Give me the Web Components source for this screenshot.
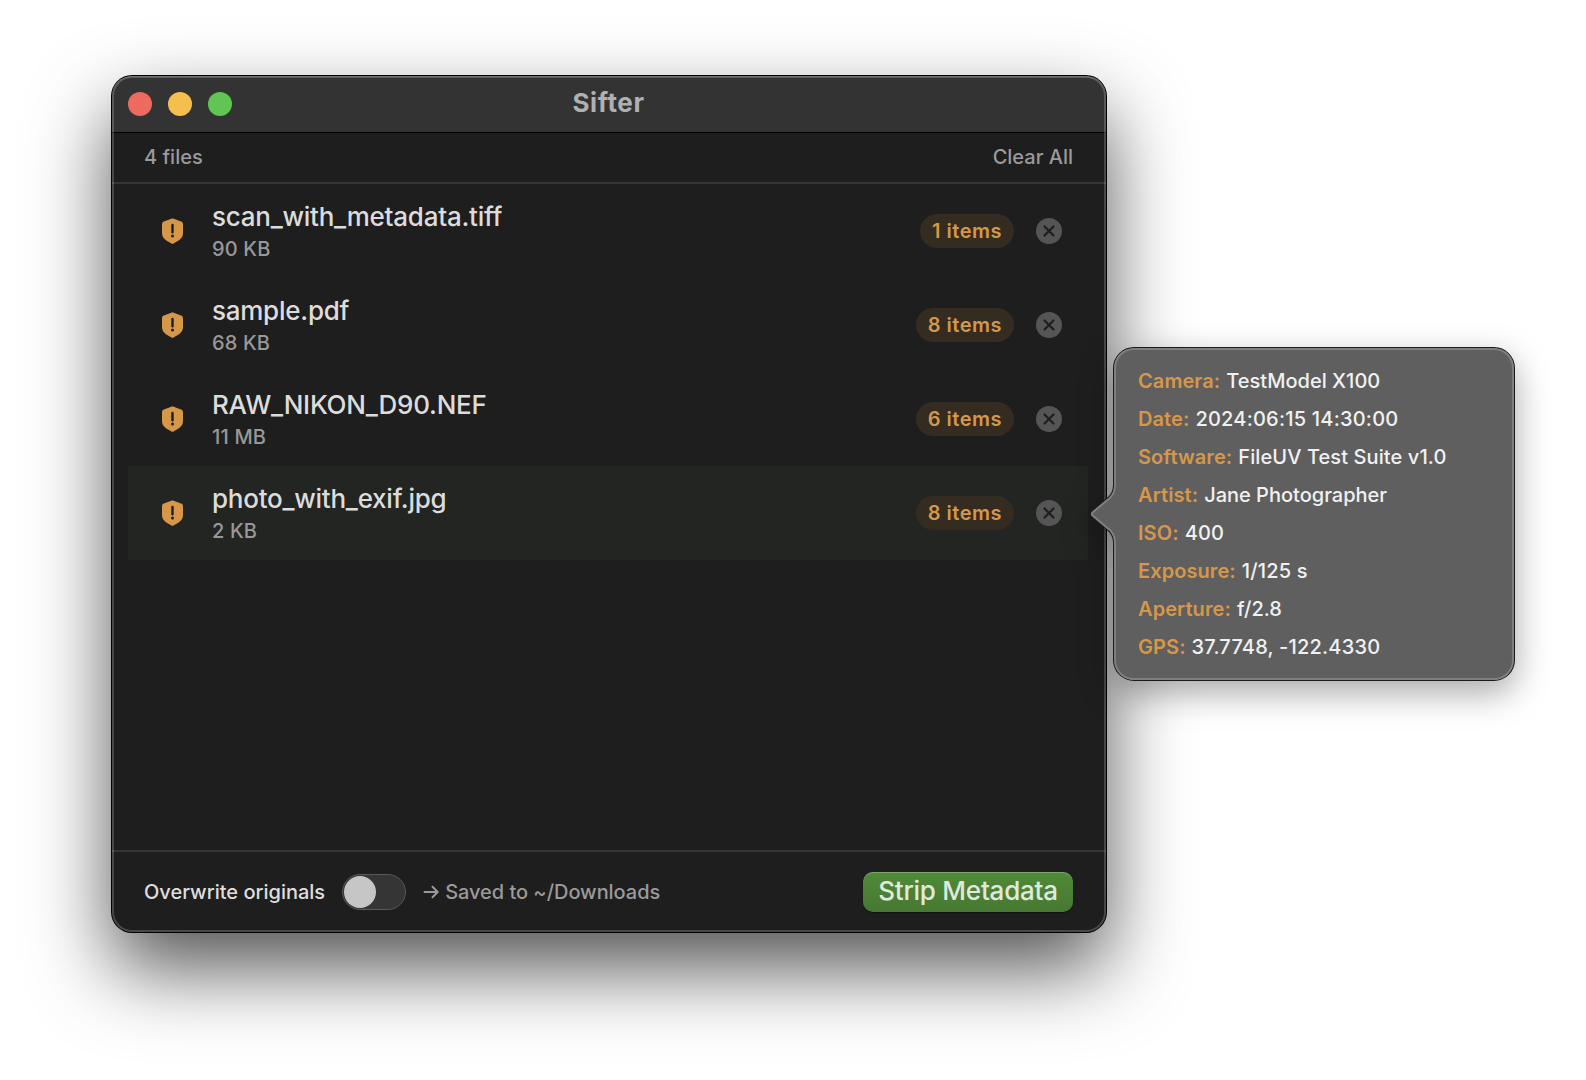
<!DOCTYPE html>
<html lang="en">
<head>
<meta charset="utf-8">
<title>Sifter</title>
<style>
  html {
    background: #fff;
  }

  body {
    position: relative;
    box-sizing: border-box;
    width: 1586px;
    height: 1080px;
    margin: 0;
    padding: 76px 112px;
    overflow: hidden;
    font-family: Inter, "Liberation Sans", sans-serif;
  }

  metadata-popover {
    position: absolute;
    left: 1090px;
    top: 348px;
  }
</style>
</head>
<body>
  <app-window heading="Sifter">
    <list-toolbar slot="toolbar" count="4 files" action="Clear All"></list-toolbar>
    <file-row name="scan_with_metadata.tiff" size="90 KB" items="1 items"></file-row>
    <file-row name="sample.pdf" size="68 KB" items="8 items"></file-row>
    <file-row name="RAW_NIKON_D90.NEF" size="11 MB" items="6 items"></file-row>
    <file-row name="photo_with_exif.jpg" size="2 KB" items="8 items" active></file-row>
    <action-bar slot="footer">
      <span>Overwrite originals</span>
      <toggle-switch></toggle-switch>
      <save-hint>Saved to ~/Downloads</save-hint>
      <primary-button slot="end">Strip Metadata</primary-button>
    </action-bar>
  </app-window>

  <metadata-popover>
    <meta-item label="Camera:" style="--ls: 0.02px">TestModel X100</meta-item>
    <meta-item label="Date:" style="--ls: 0.22px">2024:06:15 14:30:00</meta-item>
    <meta-item label="Software:" style="--ls: 0.1px">FileUV Test Suite v1.0</meta-item>
    <meta-item label="Artist:" style="--ls: 0px">Jane Photographer</meta-item>
    <meta-item label="ISO:">400</meta-item>
    <meta-item label="Exposure:">1/125 s</meta-item>
    <meta-item label="Aperture:" style="--ls: 0px">f/2.8</meta-item>
    <meta-item label="GPS:" style="--ls: 0.2px">37.7748, -122.4330</meta-item>
  </metadata-popover>

<script>
function define(tagName, html, attributes = []) {
  const template = document.createElement("template");
  template.innerHTML = html;

  customElements.define(tagName, class extends HTMLElement {
    constructor() {
      super();
      this.attachShadow({ mode: "open" });
      this.shadowRoot.appendChild(template.content.cloneNode(true));
    }

    connectedCallback() {
      for (const name of attributes) {
        this.shadowRoot.getElementById(name).textContent = this.getAttribute(name) || "";
      }
    }
  });
}

define("app-window", `
  <style>
    :host {
      position: relative;
      display: flex;
      flex-direction: column;
      width: 994px;
      height: 856px;
      border-radius: 20px;
      background: #1e1e1e;
      box-shadow: 0 0 0 1px #000, 0 36px 80px rgba(0, 0, 0, 0.68);
    }

    /* light rim drawn over the content */
    :host::after {
      content: "";
      position: absolute;
      inset: 0;
      border-radius: inherit;
      box-shadow: inset 0 2px 1px -1px rgba(255, 255, 255, 0.18), inset 0 0 0 2px rgba(255, 255, 255, 0.19);
      pointer-events: none;
    }

    header {
      display: grid;
      grid-template-columns: 1fr auto 1fr;
      align-items: center;
      height: 56px;
      padding: 0 17px 0 16px;
      border-bottom: 1px solid #000;
      border-radius: 20px 20px 0 0;
      background: #333;
    }

    .lights {
      display: flex;
      gap: 16px;
    }

    .lights i {
      width: 24px;
      height: 24px;
      border-radius: 50%;
      background: #ed6a5e;
    }

    .lights i:nth-child(2) {
      background: #f5bf4f;
    }

    .lights i:nth-child(3) {
      background: #61c554;
    }

    h1 {
      margin: 0 0 2px;
      font-size: 26px;
      line-height: 32px;
      font-weight: 700;
      letter-spacing: 0.57px;
      color: #b0b0b0;
    }

    main {
      flex: 1;
      padding: 0 18px 0 16px;
    }
  </style>
  <header>
    <div class="lights"><i></i><i></i><i></i></div>
    <h1 id="heading"></h1>
  </header>
  <slot name="toolbar"></slot>
  <main><slot></slot></main>
  <slot name="footer"></slot>
`, ["heading"]);

define("list-toolbar", `
  <style>
    :host {
      display: flex;
      justify-content: space-between;
      align-items: center;
      height: 49px;
      padding: 0 33px 0 32px;
      border-bottom: 2px solid #353535;
      font-size: 20px;
      font-weight: 500;
      line-height: 24px;
      color: #9a9a9a;
    }

    span {
      padding-bottom: 1px;
    }
  </style>
  <span id="count"></span>
  <span id="action"></span>
`, ["count", "action"]);

define("file-row", `
  <style>
    :host {
      display: flex;
      align-items: center;
      box-sizing: border-box;
      height: 94px;
      padding: 0 26px 0 34px;
    }

    :host([active]) {
      background: #222521;
    }

    .shield {
      width: 21px;
      height: 26px;
      margin-right: 29px;
    }

    .file {
      flex: 1;
      padding-top: 4px;
    }

    .file div {
      line-height: 32px;
    }

    #name {
      font-size: 26px;
      font-weight: 500;
      letter-spacing: -0.25px;
      color: #dcdcdc;
    }

    #size {
      font-size: 20px;
      font-weight: 500;
      letter-spacing: 0.15px;
      color: #989898;
    }

    #items {
      padding: 0 12px;
      border-radius: 17px;
      background: #342b21;
      font-size: 20px;
      font-weight: 600;
      line-height: 34px;
      letter-spacing: 0.5px;
      color: #d79748;
    }

    .remove {
      width: 26px;
      height: 26px;
      margin-left: 22px;
    }
  </style>
  <svg class="shield" viewBox="0 0 21 26">
    <path fill="#d79748" d="M10.5 .5C11.3 .5 17 2.7 19.3 3.6Q21 4.3 21 6V15C21 20.2 17.2 22.4 11.6 25.4Q10.5 26 9.4 25.4C3.8 22.4 0 20.2 0 15V6Q0 4.3 1.7 3.6C4 2.7 9.7 .5 10.5 .5Z"/>
    <path stroke="#1e1e1e" stroke-width="2.4" stroke-linecap="round" d="M10.5 7V14.2"/>
    <circle fill="#1e1e1e" cx="10.5" cy="18.1" r="1.5"/>
  </svg>
  <div class="file">
    <div id="name"></div>
    <div id="size"></div>
  </div>
  <span id="items"></span>
  <svg class="remove" viewBox="0 0 26 26">
    <circle fill="#555" cx="13" cy="13" r="13"/>
    <path stroke="#1e1e1e" stroke-width="2.2" stroke-linecap="round" d="M8.5 8.5L17.5 17.5M17.5 8.5L8.5 17.5"/>
  </svg>
`, ["name", "size", "items"]);

define("action-bar", `
  <style>
    :host {
      display: flex;
      align-items: center;
      height: 80px;
      padding: 0 33px 0 32px;
      border-top: 2px solid #353535;
      font-size: 20px;
      font-weight: 500;
      line-height: 24px;
      color: #dedede;
    }

    .start {
      display: flex;
      flex: 1;
      align-items: center;
    }
  </style>
  <div class="start"><slot></slot></div>
  <slot name="end"></slot>
`);

define("toggle-switch", `
  <style>
    :host {
      box-sizing: border-box;
      display: flex;
      width: 64px;
      height: 36px;
      margin-left: 17px;
      padding: 1px;
      border: 1px solid #585858;
      border-radius: 18px;
      background: #353535;
    }

    i {
      width: 32px;
      height: 32px;
      border-radius: 50%;
      background: #c6c6c6;
    }
  </style>
  <i></i>
`);

define("save-hint", `
  <style>
    :host {
      display: flex;
      align-items: center;
      margin-left: 17px;
      letter-spacing: -0.04px;
      color: #9a9a9a;
    }

    svg {
      width: 17px;
      height: 16px;
      margin-right: 5px;
    }
  </style>
  <svg viewBox="0 0 17 16" fill="none" stroke="currentColor" stroke-width="2" stroke-linecap="round" stroke-linejoin="round">
    <path d="M1.5 8H14.5M9.5 2.8L14.7 8L9.5 13.2"/>
  </svg>
  <slot></slot>
`);

define("primary-button", `
  <style>
    :host {
      box-sizing: border-box;
      width: 210px;
      height: 40px;
      padding-bottom: 2px;
      border-radius: 10px;
      background: linear-gradient(#508a3a, #467831);
      box-shadow: inset 0 1px 0 rgba(255, 255, 255, 0.25), 0 1px 1px rgba(0, 0, 0, 0.4);
      display: flex;
      align-items: center;
      justify-content: center;
      font-size: 26px;
      font-weight: 500;
      letter-spacing: -0.24px;
      color: #e0eadc;
    }
  </style>
  <slot></slot>
`);

define("metadata-popover", `
  <style>
    :host {
      box-sizing: border-box;
      z-index: 1;
      display: flex;
      flex-direction: column;
      width: 424px;
      height: 332px;
      padding: 14px 24px 14px 48px;
    }

    svg {
      position: absolute;
      inset: 0;
      z-index: -1;
      overflow: visible;
      filter: drop-shadow(0 12px 17px rgba(0, 0, 0, 0.34));
    }
  </style>
  <svg width="424" height="332" viewBox="0 0 424 332">
    <defs>
      <path id="bubble" d="M44 0H404A20 20 0 0 1 424 20V312A20 20 0 0 1 404 332H44A20 20 0 0 1 24 312V195C24 187 20.5 183.5 17 181L2.2 168.6Q-.6 166 2.2 163.4L17 151C20.5 148.5 24 145 24 137V20A20 20 0 0 1 44 0Z"/>
      <clipPath id="inside"><use href="#bubble"/></clipPath>
    </defs>
    <use href="#bubble" fill="#5f5f5f" stroke="#1a1a1a" stroke-width="2"/>
    <use href="#bubble" fill="#5f5f5f" stroke="#7f7f7f" stroke-width="4" clip-path="url(#inside)"/>
  </svg>
  <slot></slot>
`);

define("meta-item", `
  <style>
    :host {
      display: flex;
      gap: 6px;
      font-size: 20px;
      font-weight: 500;
      line-height: 38px;
      white-space: nowrap;
      color: #f1f1f1;
    }

    #label {
      font-weight: 600;
      letter-spacing: 0.08px;
      color: #d79748;
    }

    .value {
      letter-spacing: var(--ls, 0.15px);
    }
  </style>
  <span id="label"></span>
  <span class="value"><slot></slot></span>
`, ["label"]);
</script>
</body>
</html>
